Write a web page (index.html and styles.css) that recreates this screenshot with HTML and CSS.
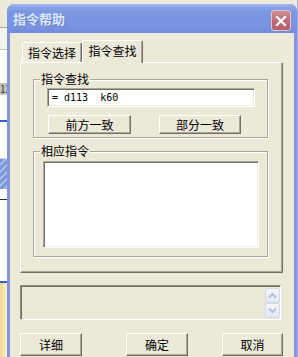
FILE: index.html
```html
<!DOCTYPE html>
<html lang="zh-CN">
<head>
    <meta charset="UTF-8">
    <meta name="viewport" content="width=device-width, initial-scale=1.0">
    <title>指令帮助</title>
    <link rel="stylesheet" href="styles.css">
</head>
<body>
    <div class="desk">
        <div class="desk-top"></div>
        <div class="desk-row"></div>
        <div class="desk-white h33"></div>
        <div class="desk-cell">13</div>
        <div class="desk-white h25"></div>
        <div class="desk-blue-line"></div>
        <div class="desk-white h36"></div>
        <div class="desk-band"></div>
        <div class="desk-white h82"></div>
        <div class="desk-blue-line"></div>
        <div class="desk-yellow"></div>
    </div>

    <div class="window">
        <div class="titlebar">
            <span class="title">指令帮助</span>
            <button class="close" aria-label="关闭">
                <svg width="12" height="12" viewBox="0 0 12 12">
                    <path d="M2 2 L10 10 M10 2 L2 10" stroke="#fff" stroke-width="2.2" stroke-linecap="square" fill="none"/>
                </svg>
            </button>
        </div>

        <div class="client">
            <div class="tabs">
                <div class="tab">指令选择</div>
                <div class="tab active">指令查找</div>
            </div>
            <div class="panel">
                <div class="group group-find">
                    <span class="legend">指令查找</span>
                    <div class="edit">= d113  k60</div>
                    <div class="row">
                        <button class="btn btn-front">前方一致</button>
                        <button class="btn btn-part">部分一致</button>
                    </div>
                </div>
                <div class="group group-list">
                    <span class="legend">相应指令</span>
                    <div class="listbox"></div>
                </div>
            </div>

            <div class="memo">
                <div class="spin">
                    <div class="spin-btn">
                        <svg width="13" height="13" viewBox="0 0 13 13"><polyline points="3,8.5 6.5,5 10,8.5" stroke="#b4bfd6" stroke-width="2" fill="none"/></svg>
                    </div>
                    <div class="spin-btn">
                        <svg width="13" height="13" viewBox="0 0 13 13"><polyline points="3,4.5 6.5,8 10,4.5" stroke="#b4bfd6" stroke-width="2" fill="none"/></svg>
                    </div>
                </div>
            </div>

            <div class="actions">
                <button class="btn btn-action">详细</button>
                <button class="btn btn-action btn-ok">确定</button>
                <button class="btn btn-action btn-cancel">取消</button>
            </div>
        </div>
    </div>

    <div class="edge"></div>
</body>
</html>
```

FILE: styles.css
```css
body {
    margin: 0;
    height: 357px;
    overflow: hidden;
    display: flex;
    background-color: #ece9d8;
    font-family: "Noto Sans CJK SC", "Liberation Sans", sans-serif;
    font-size: 12px;
    color: #000;
}

/* desktop bits behind the dialog */
.desk {
    width: 7px;
    flex: none;
    display: flex;
    flex-direction: column;
    overflow: hidden;
}
.desk-top {
    height: 27px;
    background: #ece9d8;
    border-bottom: 1px solid #aca899;
}
.desk-row {
    height: 21px;
    background: #f4f3ee;
    border-bottom: 1px solid #c8c5b6;
}
.desk-white {
    background: #fff;
}
.h33 { height: 33px; }
.h25 { height: 25px; }
.h36 { height: 36px; border-bottom: 1px solid #d0d0d0; }
.h82 { height: 82px; border-top: 10px solid #fff; box-shadow: inset 0 1px 0 #333; }
.desk-cell {
    height: 12px;
    background: #c4c2b8;
    font-size: 10px;
    line-height: 12px;
    text-align: right;
    color: #333;
}
.desk-blue-line {
    height: 2px;
    background: #3d5fc4;
}
.desk-band {
    height: 30px;
    background: repeating-linear-gradient(135deg, #7d98dc 0 3px, #a9bbe8 3px 5px);
}
.desk-yellow {
    flex: 1;
    background: linear-gradient(90deg, #f0d890, #fbeecb);
}
.edge {
    flex: 1;
    background: #9fb2e2;
}

/* dialog window */
.window {
    width: 290px;
    height: 353px;
    margin-top: 4px;
    flex: none;
    box-sizing: border-box;
    padding: 0 3px;
    background: #7e97df;
    border-radius: 7px 7px 0 0;
    display: flex;
    flex-direction: column;
    overflow: hidden;
}
.titlebar {
    height: 29px;
    flex: none;
    margin: 0 -3px;
    padding: 0 6px;
    display: flex;
    justify-content: space-between;
    align-items: flex-start;
    border-radius: 7px 7px 0 0;
    background: linear-gradient(#a9bcf0 0, #8aa3e6 3px, #7b97e1 8px, #7994e0 22px, #6f8bdb 29px);
}
.title {
    margin-top: 7px;
    font-size: 13px;
    font-weight: bold;
    line-height: 16px;
    color: #dde6fa;
    text-shadow: 1px 1px 0 #6a83cf;
}
.close {
    width: 20px;
    height: 21px;
    margin-top: 6px;
    padding: 0;
    border: 1px solid #e4c3cb;
    border-radius: 3px;
    background: linear-gradient(#d08c93, #bd6873 60%, #b65e6b);
    display: flex;
    align-items: center;
    justify-content: center;
}

.client {
    flex: 1;
    background: #ece9d8;
    padding: 7px 0 0 10px;
}

/* tab control */
.tabs {
    height: 22px;
    padding-left: 2px;
    display: flex;
    align-items: flex-end;
}
.tab {
    width: 60px;
    height: 20px;
    box-sizing: border-box;
    border: 1px solid #fff;
    border-right-color: #716f64;
    border-bottom: none;
    border-radius: 2px 2px 0 0;
    box-shadow: inset -1px 0 0 #aca899;
    line-height: 19px;
    text-align: center;
    background: #ece9d8;
}
.tab.active {
    width: 61px;
    height: 23px;
    margin-bottom: -1px;
    position: relative;
    z-index: 1;
    line-height: 20px;
}
.panel {
    width: 263px;
    height: 211px;
    box-sizing: border-box;
    border: 1px solid;
    border-color: #fff #716f64 #716f64 #fff;
    box-shadow: inset -1px -1px 0 #aca899;
    padding: 16px 0 0 12px;
}

/* group boxes */
.group {
    width: 235px;
    box-sizing: border-box;
    position: relative;
    border: 1px solid #aca899;
    box-shadow: inset 1px 1px 0 #fff, 1px 1px 0 #fff;
}
.legend {
    position: absolute;
    top: -8px;
    left: 6px;
    padding: 0 1px;
    line-height: 14px;
    background: #ece9d8;
}
.group-find {
    height: 59px;
    padding: 8px 0 0 13px;
}
.group-list {
    height: 106px;
    margin-top: 13px;
    padding: 9px 0 0 9px;
}

.edit {
    width: 208px;
    height: 19px;
    box-sizing: border-box;
    border: 1px solid;
    border-color: #aca899 #fff #fff #aca899;
    box-shadow: inset 1px 1px 0 #716f64, inset -1px -1px 0 #f1efe2;
    background: #fff;
    padding-left: 4px;
    font-family: "DejaVu Sans Mono", "Liberation Mono", monospace;
    font-size: 10px;
    line-height: 17px;
    white-space: pre;
}
.listbox {
    width: 216px;
    height: 87px;
    box-sizing: border-box;
    border: 1px solid;
    border-color: #aca899 #fff #fff #aca899;
    box-shadow: inset 1px 1px 0 #716f64, inset -1px -1px 0 #f1efe2;
    background: #fff;
}
.row {
    display: flex;
    margin-top: 8px;
    padding-left: 1px;
}

/* classic buttons */
.btn {
    height: 19px;
    box-sizing: border-box;
    padding: 0;
    border: 1px solid;
    border-color: #fff #716f64 #716f64 #fff;
    box-shadow: inset -1px -1px 0 #aca899;
    background: #ece9d8;
    font-family: inherit;
    font-size: 12px;
    line-height: 16px;
    color: #000;
}
.btn-front { width: 83px; }
.btn-part { width: 82px; margin-left: 28px; }

.memo {
    width: 261px;
    height: 35px;
    margin-top: 12px;
    box-sizing: border-box;
    border: 1px solid;
    border-color: #8f8c7e #fff #fff #8f8c7e;
    box-shadow: inset 1px 1px 0 #716f64;
    padding-top: 2px;
    display: flex;
    justify-content: flex-end;
}
.spin {
    width: 15px;
    display: flex;
    flex-direction: column;
}
.spin-btn {
    height: 15px;
    box-sizing: border-box;
    border: 1px solid #d3d9e8;
    border-radius: 2px;
    background: linear-gradient(#f3f5fa, #e1e6f1);
    display: flex;
    align-items: center;
    justify-content: center;
}

.actions {
    display: flex;
    margin-top: 13px;
}
.btn-action {
    width: 62px;
    height: 23px;
    line-height: 20px;
}
.btn-ok { margin-left: 44px; }
.btn-cancel { width: 61px; margin-left: 34px; }
```
